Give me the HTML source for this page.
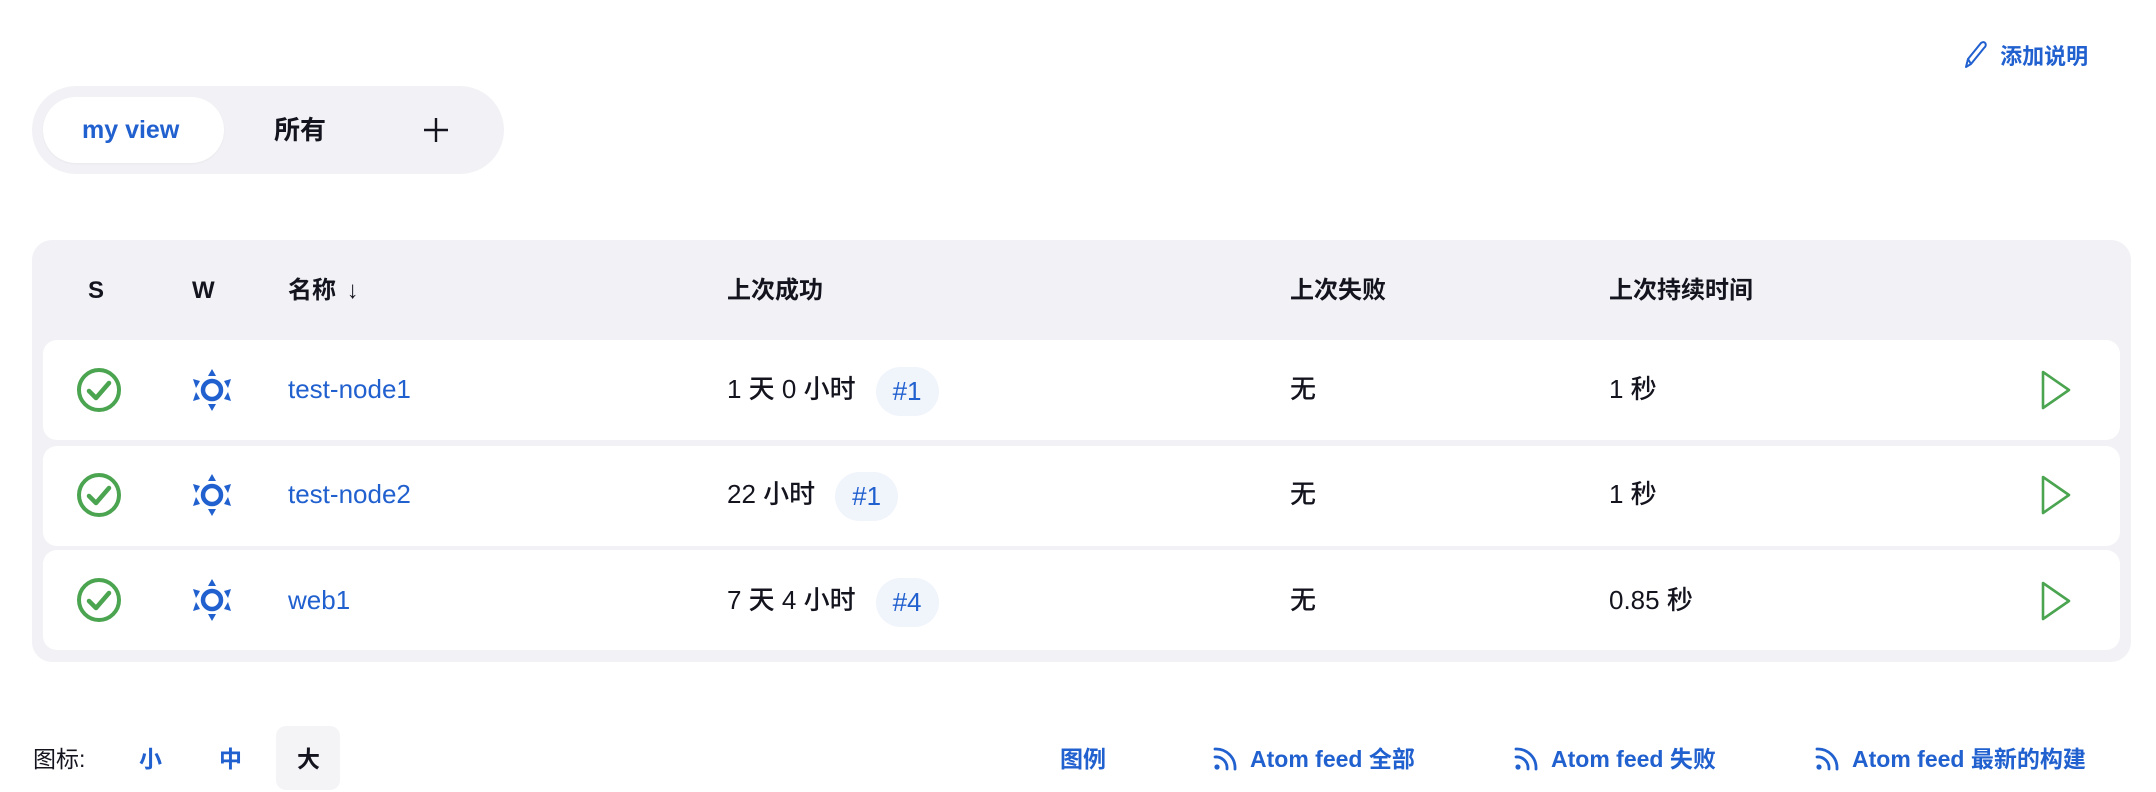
<!DOCTYPE html>
<html><head><meta charset="utf-8"><style>
*{margin:0;padding:0;box-sizing:border-box}
body{width:2156px;height:792px;background:#fff;position:relative;overflow:hidden;font-family:"Liberation Sans","Noto Sans CJK SC",sans-serif;color:#14141f}
.a{position:absolute;white-space:nowrap}
.blue{color:#2160cf}
.tabs{left:32px;top:86px;width:472px;height:88px;border-radius:44px;background:#f2f2f6}
.tab1{left:43px;top:97px;width:181px;height:66px;border-radius:33px;background:#fff;box-shadow:0 1px 2px rgba(0,0,0,.04)}
.t26{font-size:26px;line-height:30px}
.tbl{left:32px;top:240px;width:2099px;height:422px;border-radius:20px;background:#f2f2f6}
.row{left:43px;width:2077px;height:100px;border-radius:14px;background:#fff}
.hd{font-size:24px;font-weight:bold;top:276px;line-height:30px}
.badge{display:inline-block;height:49px;line-height:49px;padding:0 17px;border-radius:25px;background:#f0f4fb;color:#2160cf;margin-left:20px;vertical-align:middle}
.cell{font-size:26px;line-height:49px;font-weight:500}
.ft{font-size:23px;font-weight:bold;top:744px;line-height:30px}
</style></head><body>
<div class="a" style="left:1962px;top:40px;font-size:22px;font-weight:bold;line-height:30px" >
<svg width="26" height="30" viewBox="0 0 26 30" style="vertical-align:-6px"><path d="M4 27 L6 19 L19 3 Q22 1 23.5 3.5 Q24.5 6 22 8 L9 24 Z M6 19 L9 24" fill="none" stroke="#2160cf" stroke-width="2" stroke-linejoin="round"/></svg>
<span class="blue" style="margin-left:6px">添加说明</span></div>

<div class="a tabs"></div>
<div class="a tab1"></div>
<div class="a t26 blue" style="left:82px;top:115px;font-weight:bold;font-size:25px">my view</div>
<div class="a t26" style="left:274px;top:115px;font-weight:bold">所有</div>
<svg class="a" style="left:422px;top:116px" width="28" height="28"><path d="M14 2V26M2 14H26" stroke="#14141f" stroke-width="2.4"/></svg>

<div class="a tbl"></div>
<div class="a hd" style="left:88px">S</div>
<div class="a hd" style="left:192px">W</div>
<div class="a hd" style="left:288px">名称 <span style="font-weight:normal;margin-left:4px">↓</span></div>
<div class="a hd" style="left:727px">上次成功</div>
<div class="a hd" style="left:1290px">上次失败</div>
<div class="a hd" style="left:1609px">上次持续时间</div>

<div class="a row" style="top:340px"></div>
<div class="a row" style="top:446px"></div>
<div class="a row" style="top:550px"></div>

<!-- rows -->
<div id="r"></div>
<svg width="0" height="0" style="position:absolute"><defs>
<g id="ok"><circle cx="23" cy="23" r="20" fill="none" stroke="#4ba450" stroke-width="4"/><path d="M13 24 L20 31 L33 16" fill="none" stroke="#4ba450" stroke-width="4.5" stroke-linecap="round" stroke-linejoin="round"/></g>
<g id="sun"><circle cx="22" cy="22" r="9" fill="none" stroke="#2160cf" stroke-width="4.5"/><path d="M22 1 L26 8 H18Z M22 43 L26 36 H18Z M3 11 L10 13 L6 20Z M41 11 L34 13 L38 20Z M3 33 L10 31 L6 24Z M41 33 L34 31 L38 24Z" fill="#2160cf"/></g>
<g id="play"><path d="M3 3 L29 21 L3 39 Z" fill="none" stroke="#4ba450" stroke-width="2.6" stroke-linejoin="round"/></g>
</defs></svg>

<svg class="a" style="left:76px;top:367px" width="46" height="46"><use href="#ok"/></svg>
<svg class="a" style="left:190px;top:368px" width="44" height="44"><use href="#sun"/></svg>
<div class="a cell blue" style="left:288px;top:365px">test-node1</div>
<div class="a cell" style="left:727px;top:365px">1 天 0 小时<span class="badge">#1</span></div>
<div class="a cell" style="left:1290px;top:365px">无</div>
<div class="a cell" style="left:1609px;top:365px">1 秒</div>
<svg class="a" style="left:2040px;top:369px" width="34" height="42"><use href="#play"/></svg>

<svg class="a" style="left:76px;top:472px" width="46" height="46"><use href="#ok"/></svg>
<svg class="a" style="left:190px;top:473px" width="44" height="44"><use href="#sun"/></svg>
<div class="a cell blue" style="left:288px;top:470px">test-node2</div>
<div class="a cell" style="left:727px;top:470px">22 小时<span class="badge">#1</span></div>
<div class="a cell" style="left:1290px;top:470px">无</div>
<div class="a cell" style="left:1609px;top:470px">1 秒</div>
<svg class="a" style="left:2040px;top:474px" width="34" height="42"><use href="#play"/></svg>

<svg class="a" style="left:76px;top:577px" width="46" height="46"><use href="#ok"/></svg>
<svg class="a" style="left:190px;top:578px" width="44" height="44"><use href="#sun"/></svg>
<div class="a cell blue" style="left:288px;top:576px">web1</div>
<div class="a cell" style="left:727px;top:576px">7 天 4 小时<span class="badge">#4</span></div>
<div class="a cell" style="left:1290px;top:576px">无</div>
<div class="a cell" style="left:1609px;top:576px">0.85 秒</div>
<svg class="a" style="left:2040px;top:580px" width="34" height="42"><use href="#play"/></svg>

<div class="a ft" style="left:33px;font-weight:normal">图标:</div>
<div class="a ft blue" style="left:139px">小</div>
<div class="a ft blue" style="left:219px">中</div>
<div class="a" style="left:276px;top:726px;width:64px;height:64px;border-radius:10px;background:#f4f4f6"></div>
<div class="a ft" style="left:297px">大</div>
<div class="a ft blue" style="left:1060px">图例</div>
<svg width="0" height="0" style="position:absolute"><defs><g id="rss"><circle cx="5" cy="23" r="2.6" fill="#2160cf"/><path d="M3 13 A11 11 0 0 1 15 25 M3 5 A19 19 0 0 1 23 25" fill="none" stroke="#2160cf" stroke-width="2.8" stroke-linecap="round"/></g></defs></svg>
<svg class="a" style="left:1212px;top:744px" width="26" height="28"><use href="#rss"/></svg>
<div class="a ft blue" style="left:1250px">Atom feed 全部</div>
<svg class="a" style="left:1513px;top:744px" width="26" height="28"><use href="#rss"/></svg>
<div class="a ft blue" style="left:1551px">Atom feed 失败</div>
<svg class="a" style="left:1814px;top:744px" width="26" height="28"><use href="#rss"/></svg>
<div class="a ft blue" style="left:1852px">Atom feed 最新的构建</div>
</body></html>
